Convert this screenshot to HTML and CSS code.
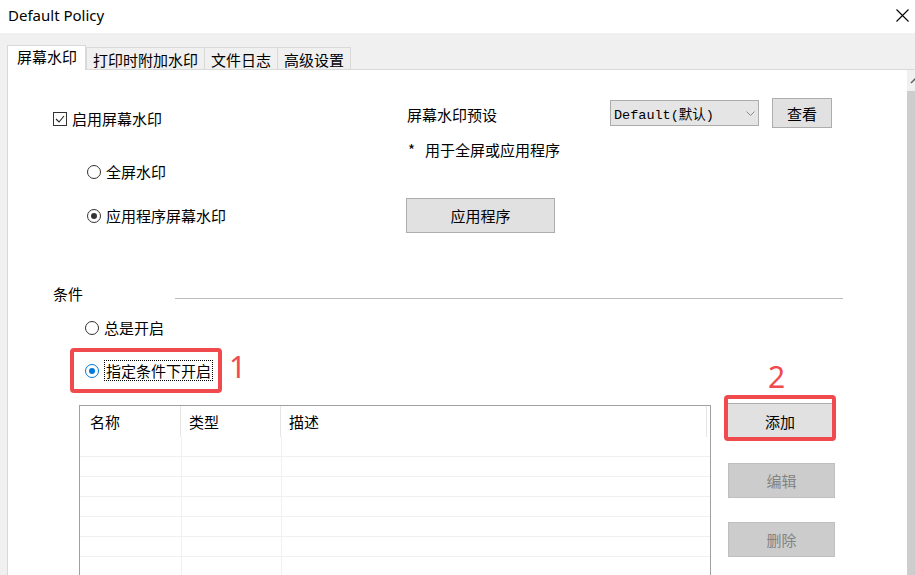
FILE: index.html
```html
<!DOCTYPE html>
<html lang="zh-CN">
<head>
  <meta charset="UTF-8">
  <title>Default Policy</title>
  <link rel="stylesheet" href="styles.css">
</head>
<body>

  <div class="titlebar">
    <span class="title">Default Policy</span>
    <svg class="close" viewBox="0 0 13 13"><path d="M0.5 0.5L12.5 12.5M12.5 0.5L0.5 12.5" stroke="#000" stroke-width="1.1" fill="none"/></svg>
  </div>

  <div class="tabs">
    <div class="tab active">屏幕水印</div>
    <div class="tab">打印时附加水印</div>
    <div class="tab">文件日志</div>
    <div class="tab">高级设置</div>
  </div>

  <div class="content">
    <div class="panel">

      <div class="top">
        <div class="mode-col">
          <label class="opt check-row">
            <span class="checkbox"><svg viewBox="0 0 12 12"><polyline points="2,6 5,9 10,3" stroke="#222" stroke-width="1.1" fill="none"/></svg></span>
            启用屏幕水印
          </label>
          <label class="opt r-full"><span class="radio"></span>全屏水印</label>
          <label class="opt r-app"><span class="radio on"></span>应用程序屏幕水印</label>
        </div>

        <div class="preset-col">
          <div class="preset-row">
            <span class="preset-label">屏幕水印预设</span>
            <div class="select">
              <span>Default(默认)</span>
              <svg class="chevron" viewBox="0 0 9 5"><polyline points="0.5,0.5 4.5,4.5 8.5,0.5" stroke="#8a8a8a" fill="none"/></svg>
            </div>
            <button class="btn btn-view">查看</button>
          </div>
          <div class="hint"><span class="star">*</span>用于全屏或应用程序</div>
          <button class="btn btn-apps">应用程序</button>
        </div>
      </div>

      <div class="cond-head">
        <span>条件</span>
        <div class="rule"></div>
      </div>

      <label class="opt r-always"><span class="radio"></span>总是开启</label>

      <div class="mark mark-1">
        <label class="opt"><span class="radio on focus"></span><span class="focus-text">指定条件下开启</span></label>
        <span class="step">1</span>
      </div>

      <div class="list-area">
        <div class="list">
          <div class="list-head"><div>名称</div><div>类型</div><div>描述</div></div>
          <div class="list-row"><div></div><div></div><div></div></div>
          <div class="list-row"><div></div><div></div><div></div></div>
          <div class="list-row"><div></div><div></div><div></div></div>
          <div class="list-row"><div></div><div></div><div></div></div>
          <div class="list-row"><div></div><div></div><div></div></div>
          <div class="list-row"><div></div><div></div><div></div></div>
          <div class="list-row"><div></div><div></div><div></div></div>
        </div>

        <div class="side">
          <div class="mark mark-2">
            <span class="step">2</span>
            <button class="btn btn-add">添加</button>
          </div>
          <button class="btn btn-off">编辑</button>
          <button class="btn btn-off">删除</button>
        </div>
      </div>

    </div>

    <div class="scrollbar">
      <div class="sb-up"><svg viewBox="0 0 17 20"><polyline points="4,12 8.5,7.5 13,12" stroke="#606060" stroke-width="1.5" fill="none"/></svg></div>
      <div class="sb-thumb"></div>
    </div>
  </div>

</body>
</html>
```

FILE: styles.css
```css
html, body {
  margin: 0;
  padding: 0;
}

body {
  width: 915px;
  height: 575px;
  overflow: hidden;
  background: #f0f0f0;
  font-family: "Noto Sans CJK SC", "Noto Sans", sans-serif;
  font-size: 15px;
  color: #000;
}

/* Window title */
.titlebar {
  height: 33px;
  box-sizing: border-box;
  padding: 0 6px 3px 8px;
  background: #fff;
  display: flex;
  align-items: center;
  justify-content: space-between;
}

.title {
  font-family: "Noto Sans", "Open Sans", sans-serif;
  font-size: 15px;
}

.close {
  width: 13px;
  height: 13px;
}

/* Tab strip */
.tabs {
  height: 36px;
  margin-left: 7px;
  display: flex;
  align-items: flex-end;
  border-bottom: 1px solid #d9d9d9;
}

.tab {
  border: 1px solid #d9d9d9;
  background: #f0f0f0;
  line-height: 19px;
  padding: 2px 6px 0;
  margin: 0 0 -1px -1px;
}

.tab.active {
  background: #fff;
  border-bottom: none;
  line-height: 20px;
  padding: 1px 8px 3px 9px;
  margin-left: 0;
}

.active + .tab {
  margin-left: 0;
}

.content {
  display: flex;
  height: 506px;
}

.panel {
  flex: 1;
  margin-left: 7px;
  border-left: 1px solid #d9d9d9;
  background: #fff;
  padding-left: 45px;
}

/* Checkbox / radio */
.opt {
  display: flex;
  align-items: center;
  gap: 5px;
  height: 20px;
  line-height: 20px;
}

.checkbox {
  width: 14px;
  height: 14px;
  box-sizing: border-box;
  border: 1px solid #333;
  background: #fff;
  display: flex;
  flex: none;
}

.checkbox svg {
  width: 12px;
  height: 12px;
}

.radio {
  width: 14px;
  height: 14px;
  box-sizing: border-box;
  border: 1px solid #333;
  border-radius: 50%;
  background: #fff;
  display: flex;
  align-items: center;
  justify-content: center;
  flex: none;
}

.radio.on::after {
  content: "";
  width: 6px;
  height: 6px;
  border-radius: 50%;
  background: #333;
}

.radio.focus {
  border-color: #0078d7;
}

.radio.focus::after {
  background: #0078d7;
}

.focus-text {
  border: 1px dotted #000;
  padding: 0 1px;
  line-height: 19px;
}

/* Top section */
.top {
  display: flex;
}

.mode-col {
  width: 354px;
  display: flex;
  flex-direction: column;
  align-items: flex-start;
}

.check-row { margin-top: 39px; }
.r-full { margin: 33px 0 0 34px; }
.r-app { margin: 24px 0 0 34px; }

.preset-col {
  display: flex;
  flex-direction: column;
  align-items: flex-start;
}

.preset-row {
  margin-top: 28px;
  height: 30px;
  display: flex;
  align-items: center;
}

.preset-label {
  width: 203px;
  padding-top: 3px;
}

.select {
  width: 149px;
  height: 26px;
  box-sizing: border-box;
  border: 1px solid #acacac;
  background: #e5e5e5;
  display: flex;
  align-items: center;
  justify-content: space-between;
  padding: 0 3px 0 3px;
  font-family: "Liberation Mono", "Noto Sans CJK SC", monospace;
  font-size: 13.5px;
}

.chevron {
  width: 9px;
  height: 5px;
}

.btn {
  font-family: inherit;
  font-size: 15px;
  color: #000;
  background: #e1e1e1;
  border: 1px solid #adadad;
  padding: 0;
  box-sizing: border-box;
}

.btn-view {
  width: 60px;
  height: 30px;
  margin-left: 13px;
}

.hint {
  margin-top: 12px;
  line-height: 20px;
  padding-left: 1px;
}

.star {
  display: inline-block;
  width: 17px;
}

.btn-apps {
  width: 149px;
  height: 35px;
  margin: 38px 0 0 -1px;
}

/* Conditions */
.cond-head {
  display: flex;
  margin-top: 51px;
  height: 20px;
  line-height: 20px;
}

.rule {
  width: 668px;
  height: 1px;
  background: #bcbcbc;
  margin: 14px 0 0 92px;
}

.r-always { margin: 14px 0 0 32px; }

.mark {
  position: relative;
  box-sizing: border-box;
  border: 4px solid #f04a4f;
  border-radius: 4px;
}

.mark-1 {
  width: 152px;
  height: 45px;
  margin: 10px 0 0 17px;
  padding-left: 11px;
  display: flex;
  align-items: center;
}

.step {
  position: absolute;
  font-family: "Noto Sans", sans-serif;
  font-size: 30px;
  line-height: 30px;
  color: #f04a4f;
}

.mark-1 .step {
  left: calc(100% + 11px);
  top: 0;
}

.mark-2 .step {
  left: 40px;
  top: -37px;
}

.list-area {
  display: flex;
  align-items: flex-start;
  margin: 2px 0 0 26px;
}

.list {
  width: 632px;
  height: 180px;
  margin-top: 10px;
  box-sizing: border-box;
  border: 1px solid #a0a0a0;
  background: #fff;
  overflow: hidden;
}

.list-head {
  display: grid;
  grid-template-columns: 101px 100px 426px;
  height: 31px;
  line-height: 31px;
}

.list-head div {
  border-right: 1px solid #e5e5e5;
  padding-left: 8px;
}

.list-head div:first-child {
  padding-left: 10px;
}

.list-row {
  display: grid;
  grid-template-columns: 102px 100px 1fr;
  height: 20px;
  box-sizing: border-box;
  border-bottom: 1px solid #f0f0f0;
}

.list-row div:not(:last-child) {
  border-right: 1px solid #f0f0f0;
}

.side {
  margin-left: 13px;
  display: flex;
  flex-direction: column;
  align-items: flex-start;
}

.mark-2 {
  width: 112px;
  height: 46px;
  background: #fff;
}

.btn-add {
  display: block;
  width: 104px;
  height: 34px;
  margin-top: 4px;
  padding-top: 2px;
  border-width: 1px 0 0;
}

.btn-off {
  width: 107px;
  height: 35px;
  margin: 22px 0 0 4px;
  background: #cccccc;
  border-color: #bfbfbf;
  color: #838383;
}

.btn-off + .btn-off {
  margin-top: 24px;
}

/* Window scrollbar */
.scrollbar {
  width: 8px;
  margin-top: 1px;
  overflow: hidden;
  display: flex;
  flex-direction: column;
}

.sb-up {
  height: 20px;
  flex: none;
  background: #f0f0f0;
}

.sb-up svg {
  display: block;
  width: 17px;
  height: 20px;
}

.sb-thumb {
  flex: 1;
  background: #cdcdcd;
}
```
